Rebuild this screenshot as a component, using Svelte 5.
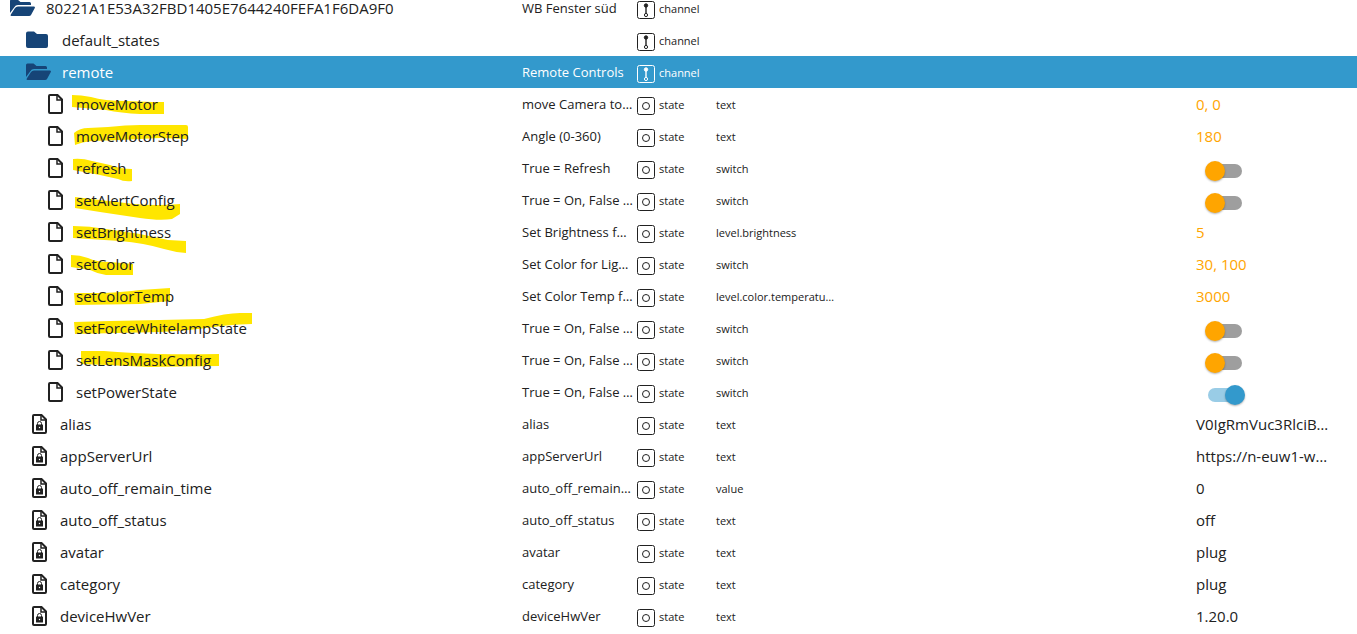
<script lang="ts">
  type Row = {
    id: string
    level: number
    icon: 'open' | 'folder' | 'file' | 'locked'
    name?: string
    type: 'channel' | 'state'
    role?: string
    value?: string | boolean
    pending?: boolean
    selected?: boolean
    marker?: string
  }

  const rows: Row[] = [
    { id: '80221A1E53A32FBD1405E7644240FEFA1F6DA9F0', level: 0, icon: 'open', name: 'WB Fenster süd', type: 'channel' },
    { id: 'default_states', level: 1, icon: 'folder', type: 'channel' },
    { id: 'remote', level: 1, icon: 'open', name: 'Remote Controls', type: 'channel', selected: true },
    {
      id: 'moveMotor', level: 2, icon: 'file', name: 'move Camera to…', type: 'state', role: 'text', value: '0, 0', pending: true,
      marker: 'M-4 7 Q5 7 15 9 Q28 13 50 13 L76 14 H88 V26 H64 Q45 25 30 22 L-4 19Z',
    },
    {
      id: 'moveMotorStep', level: 2, icon: 'file', name: 'Angle (0-360)', type: 'state', role: 'text', value: '180', pending: true,
      marker: 'M-2 13 Q4 8 12 8 L32 7 Q50 5 64 5 H110 Q112 5 112 7 V19 L84 18 L44 20 L16 21 Q6 22 -1 25Z',
    },
    {
      id: 'refresh', level: 2, icon: 'file', name: 'True = Refresh', type: 'state', role: 'switch', value: false, pending: true,
      marker: 'M-3 7 Q6 6 16 9 L34 13 Q44 17 56 17 V29 Q48 30 42 27 L24 23 L-3 18Z',
    },
    {
      id: 'setAlertConfig', level: 2, icon: 'file', name: 'True = On, False …', type: 'state', role: 'switch', value: false, pending: true,
      marker: 'M-1 13 L24 16 L58 20 Q82 22 104 20 V30 L96 35 Q84 37 64 34 L24 28 L-1 24Z',
    },
    {
      id: 'setBrightness', level: 2, icon: 'file', name: 'Set Brightness f…', type: 'state', role: 'level.brightness', value: '5', pending: true,
      marker: 'M-3 10 Q14 10 30 13 L64 18 L92 24 L110 25 V37 Q98 36 88 33 Q68 27 44 25 L-3 22Z',
    },
    {
      id: 'setColor', level: 2, icon: 'file', name: 'Set Color for Lig…', type: 'state', role: 'switch', value: '30, 100', pending: true,
      marker: 'M-5 7 Q4 7 12 10 Q20 14 34 14 L57 16 V27 H30 Q22 26 14 22 L-5 19Z',
    },
    {
      id: 'setColorTemp', level: 2, icon: 'file', name: 'Set Color Temp f…', type: 'state', role: 'level.color.temperatu…', value: '3000', pending: true,
      marker: 'M-2 13 H28 Q48 12 64 10 L94 8 V21 L64 24 L-1 25Z',
    },
    {
      id: 'setForceWhitelampState', level: 2, icon: 'file', name: 'True = On, False …', type: 'state', role: 'switch', value: false, pending: true,
      marker: 'M-2 10 L34 9 L84 8 L128 7 Q150 1 164 1 H176 V12 Q150 13 138 15 Q110 19 84 20 L-1 22Z',
    },
    {
      id: 'setLensMaskConfig', level: 2, icon: 'file', name: 'True = On, False …', type: 'state', role: 'switch', value: false, pending: true,
      marker: 'M5 7 H28 Q40 8 58 9 Q90 11 143 10 V22 L74 23 L30 21 L5 20Z',
    },
    { id: 'setPowerState', level: 2, icon: 'file', name: 'True = On, False …', type: 'state', role: 'switch', value: true },
    { id: 'alias', level: 1, icon: 'locked', name: 'alias', type: 'state', role: 'text', value: 'V0IgRmVuc3RlciB…' },
    { id: 'appServerUrl', level: 1, icon: 'locked', name: 'appServerUrl', type: 'state', role: 'text', value: 'https://n-euw1-w…' },
    { id: 'auto_off_remain_time', level: 1, icon: 'locked', name: 'auto_off_remain…', type: 'state', role: 'value', value: '0' },
    { id: 'auto_off_status', level: 1, icon: 'locked', name: 'auto_off_status', type: 'state', role: 'text', value: 'off' },
    { id: 'avatar', level: 1, icon: 'locked', name: 'avatar', type: 'state', role: 'text', value: 'plug' },
    { id: 'category', level: 1, icon: 'locked', name: 'category', type: 'state', role: 'text', value: 'plug' },
    { id: 'deviceHwVer', level: 1, icon: 'locked', name: 'deviceHwVer', type: 'state', role: 'text', value: '1.20.0' },
  ]
</script>

<table>
  <colgroup>
    <col class="col-id" />
    <col class="col-name" />
    <col class="col-type" />
    <col class="col-role" />
    <col class="col-value" />
  </colgroup>
  <tbody>
    {#each rows as row (row.id)}
      <tr class:selected={row.selected}>
        <td>
          <div class="item level-{row.level}">
            {#if row.icon === 'open'}
              <svg class="folder" viewBox="0 0 26 18" aria-hidden="true">
                <path d="M0 14V2Q0 .5 1.500 .5H7.500L10.500 3H19.500Q21 3 21 4.500V6H8Q5.500 6 4.500 8Z" />
                <path d="M8 7.500H24Q25.500 7.500 24.800 9L21 16Q20.500 17 19 17H1.500Q0 17 .8 15.500L5 9Q6 7.500 8 7.500Z" />
              </svg>
            {:else if row.icon === 'folder'}
              <svg class="folder" viewBox="0 0 26 18" aria-hidden="true">
                <path d="M2 .5H8L11 3H20Q22 3 22 5V15Q22 17 20 17H2Q0 17 0 15V2.500Q0 .5 2 .5Z" />
              </svg>
            {:else}
              <svg class="file" viewBox="0 0 15 20" aria-hidden="true">
                <path class="sheet" d="M2 1H9.500L14 5.500V18Q14 19 13 19H2Q1 19 1 18V2Q1 1 2 1Z" />
                <path class="fold" d="M9 1.500V6H13.500" />
                {#if row.icon === 'locked'}
                  <rect x="4" y="10.500" width="7" height="6" rx=".5" />
                  <path class="shackle" d="M5.500 11V9.500a2 2 0 0 1 4 0V11" />
                  <circle class="keyhole" cx="7.500" cy="13.500" r=".7" />
                {/if}
              </svg>
            {/if}
            <span class="label">
              {#if row.marker}
                <svg class="marker" viewBox="0 0 180 32" aria-hidden="true"><path d={row.marker} /></svg>
              {/if}
              <span class="id" id="id-{row.id}">{row.id}</span>
            </span>
          </div>
        </td>
        <td class="name">{row.name ?? ''}</td>
        <td class="small">
          <div class="type">
            <svg viewBox="0 0 18 18" aria-hidden="true">
              <rect x=".5" y=".5" width="17" height="17" rx="2" />
              {#if row.type === 'channel'}
                <circle class="dot" cx="9" cy="4.500" r="1.700" />
                <path class="link" d="M9 5V12.500" />
                <circle cx="9" cy="14" r="1.600" />
              {:else}
                <circle cx="9" cy="9" r="3.500" />
              {/if}
            </svg>
            {row.type}
          </div>
        </td>
        <td class="small">{row.role ?? ''}</td>
        <td class="value" class:pending={row.pending}>
          {#if typeof row.value === 'boolean'}
            <input type="checkbox" role="switch" checked={row.value} aria-labelledby="id-{row.id}" />
          {:else}
            {row.value ?? ''}
          {/if}
        </td>
      </tr>
    {/each}
  </tbody>
</table>

<style>
  :global(body) {
    background: #fff;
    overflow: hidden;
  }

  table {
    width: 100%;
    margin-top: -8px;
    table-layout: fixed;
    border-collapse: collapse;
    color: #212121;
    font-family: 'Segoe UI', 'Open Sans', 'Noto Sans', sans-serif;
    font-size: 15px;
  }

  .col-id {
    width: 522px;
  }

  .col-name {
    width: 115px;
  }

  .col-type {
    width: 79px;
  }

  .col-value {
    width: 161px;
  }

  td {
    height: 32px;
    padding: 0;
    line-height: 32px;
    white-space: nowrap;
    vertical-align: top;
  }

  .selected {
    background: #3399cc;
    color: #fff;
  }

  .item {
    display: flex;
    align-items: center;
    height: 32px;
    padding-left: 10px;
  }

  .level-1 {
    padding-left: 26px;
  }

  .level-2 {
    padding-left: 42px;
  }

  .folder {
    width: 26px;
    height: 18px;
    margin-right: 10px;
    fill: #164477;
  }

  .file {
    width: 15px;
    height: 20px;
    margin: 0 13px 0 6px;
    fill: #212121;
  }

  .sheet,
  .fold,
  .shackle {
    fill: none;
    stroke: #212121;
    stroke-width: 2;
  }

  .fold {
    stroke-width: 1.5;
  }

  .shackle {
    stroke-width: 1;
  }

  .keyhole {
    fill: #fff;
  }

  .label {
    position: relative;
  }

  .id {
    position: relative;
  }

  .marker {
    position: absolute;
    top: 0;
    left: 0;
    width: 180px;
    height: 32px;
    overflow: visible;
    fill: #ffe600;
  }

  .name {
    font-size: 13px;
  }

  .small {
    height: 30px;
    padding-top: 2px;
    font-size: 11px;
    line-height: 30px;
  }

  .type {
    display: flex;
    gap: 4px;
    height: 30px;
  }

  .type svg {
    width: 18px;
    height: 18px;
    margin-top: 7px;
    fill: none;
    stroke: currentColor;
    stroke-width: 1;
  }

  .type .dot {
    fill: currentColor;
  }

  .type .link {
    opacity: 0.7;
    stroke-width: 2;
  }

  input {
    position: relative;
    display: block;
    width: 34px;
    height: 14px;
    margin: 12px 0 0 12px;
    border-radius: 7px;
    background: #9e9e9e;
    appearance: none;
  }

  input::before {
    content: '';
    position: absolute;
    top: -3px;
    left: -3px;
    width: 20px;
    height: 20px;
    border-radius: 50%;
    background: #ffa500;
    box-shadow: 0 1px 2px rgba(0, 0, 0, 0.3);
  }

  input:checked {
    background: #99cce6;
  }

  input:checked::before {
    left: 17px;
    background: #3399cc;
  }

  .pending {
    color: #ffa500;
  }
</style>
